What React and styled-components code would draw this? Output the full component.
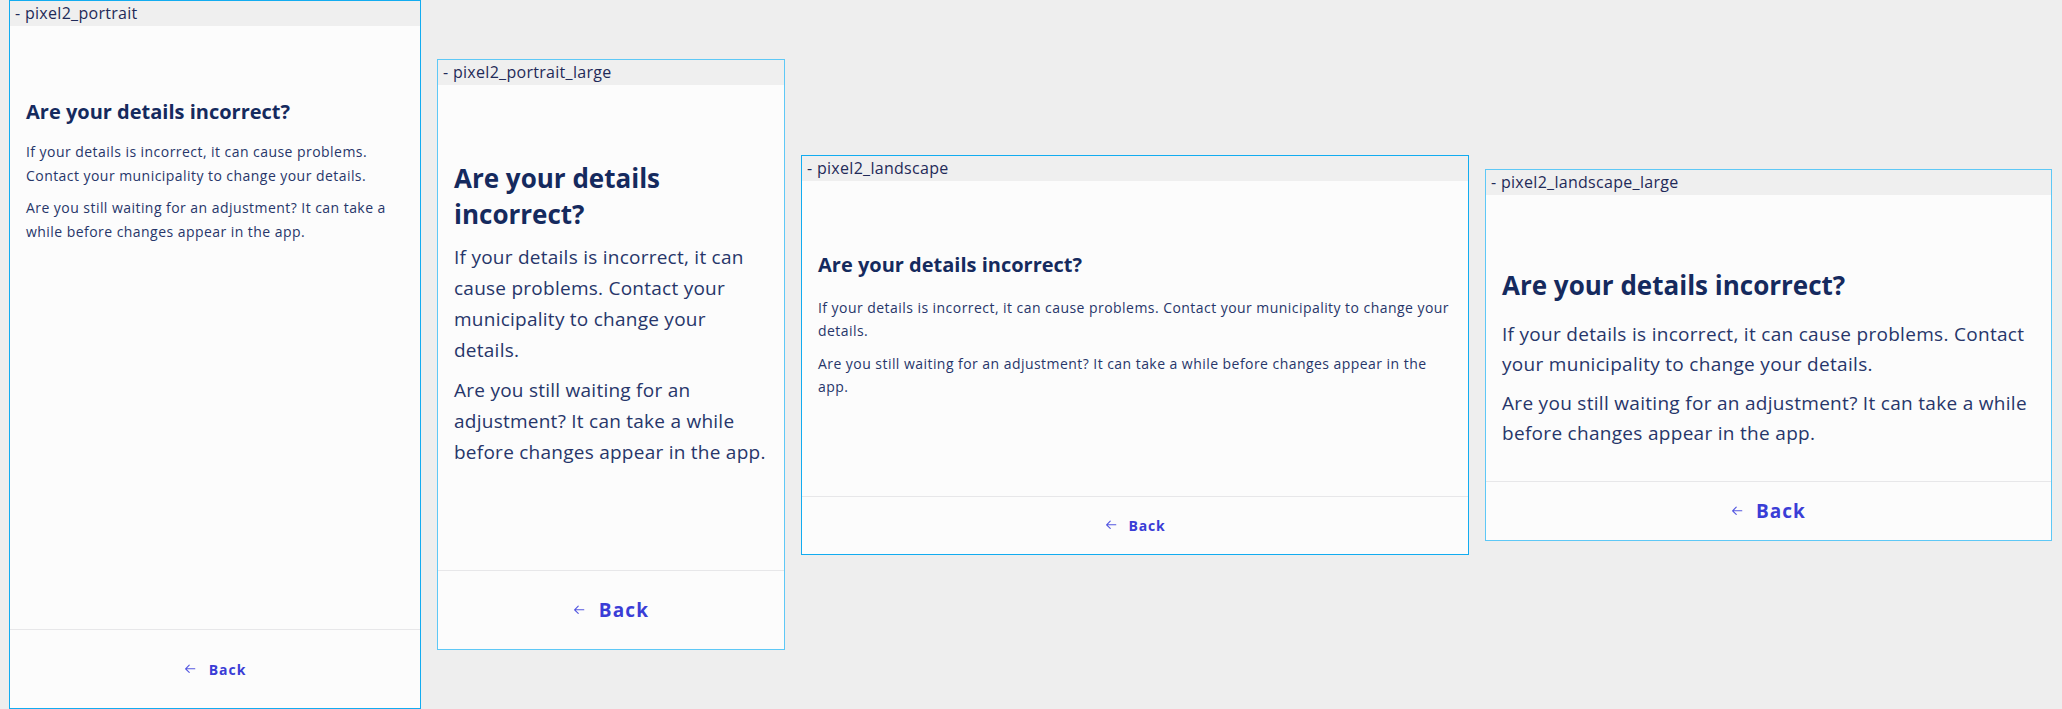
import styled, { createGlobalStyle } from "styled-components";

const GlobalStyle = createGlobalStyle`
  html, body {
    margin: 0;
    padding: 0;
    background: #eeeeee;
    font-family: "Open Sans", "Noto Sans", sans-serif;
  }
`;

const Page = styled.div`
  height: 709px;
  padding-left: 9px;
  display: flex;
  flex-direction: row;
  align-items: center;
  gap: 16px;
  overflow: hidden;
`;

const Frame = styled.div`
  flex-shrink: 0;
  width: ${props => props.$w}px;
  height: ${props => props.$h}px;
  box-sizing: border-box;
  border: 1px solid ${props => (props.$soft ? "#5ec8f6" : "#12acf0")};
  background: #fcfcfc;
  display: flex;
  flex-direction: column;
  overflow: hidden;
`;

const FrameHeader = styled.div`
  height: 25px;
  flex-shrink: 0;
  background: #efefef;
  padding-left: 5px;
  font-size: 16px;
  line-height: 25px;
  letter-spacing: 0.3px;
  color: #1f2a58;
  overflow: hidden;
  white-space: nowrap;
`;

const Content = styled.div`
  flex: 1;
  padding: ${props => props.$top}px 16px 0 16px;
  overflow: hidden;
`;

const Title = styled.h1`
  margin: 0 0 ${props => props.$gap}px 0;
  font-size: ${props => props.$size}px;
  line-height: ${props => props.$lh}px;
  font-weight: 700;
  color: #152a5e;
`;

const Paragraph = styled.p`
  margin: 0 0 ${props => props.$gap}px 0;
  font-size: ${props => props.$size}px;
  line-height: ${props => props.$lh}px;
  letter-spacing: ${props => props.$ls}px;
  color: #27366a;
`;

const Footer = styled.div`
  height: ${props => props.$h}px;
  flex-shrink: 0;
  border-top: 1px solid #e7e7e9;
  display: flex;
  align-items: center;
  justify-content: center;
`;

const BackButton = styled.button`
  border: none;
  background: none;
  padding: 0;
  display: flex;
  align-items: center;
  gap: ${props => props.$gap}px;
  font-family: "Open Sans", "Noto Sans", sans-serif;
  font-size: ${props => props.$size}px;
  font-weight: 700;
  letter-spacing: ${props => props.$ls}px;
  color: #3a3dd6;
  cursor: pointer;
`;

function ArrowLeft({ size }) {
  return (
    <svg width={size} height={size * 0.8} viewBox="0 0 12 10" fill="none">
      <path
        d="M11 5H1.5M5.2 1.2L1.4 5l3.8 3.8"
        stroke="#5457e0"
        strokeWidth="1.2"
        strokeLinecap="round"
        strokeLinejoin="round"
      />
    </svg>
  );
}

const frames = [
  {
    name: "pixel2_portrait",
    w: 412, h: 709, top: 74,
    title: { size: 20, lh: 24, gap: 16 },
    body: { size: 14, lh: 24, gap: 8, ls: 0.45 },
    footer: 78,
    back: { size: 14, ls: 1, gap: 13, arrow: 12 }
  },
  {
    name: "pixel2_portrait_large",
    soft: true,
    w: 348, h: 591, top: 75,
    title: { size: 26, lh: 36, gap: 10 },
    body: { size: 19, lh: 31, gap: 9, ls: 0.25 },
    footer: 78,
    back: { size: 19, ls: 1.2, gap: 14, arrow: 12 }
  },
  {
    name: "pixel2_landscape",
    w: 668, h: 400, top: 72,
    title: { size: 20, lh: 24, gap: 19 },
    body: { size: 14, lh: 23.5, gap: 9, ls: 0.45 },
    footer: 57,
    back: { size: 14, ls: 0.8, gap: 12, arrow: 12 }
  },
  {
    name: "pixel2_landscape_large",
    soft: true,
    w: 567, h: 372, top: 74,
    title: { size: 26, lh: 32, gap: 18 },
    body: { size: 19, lh: 30, gap: 9, ls: 0.3 },
    footer: 58,
    back: { size: 19, ls: 1, gap: 13, arrow: 12 }
  }
];

function DeviceFrame({ f }) {
  return (
    <Frame $w={f.w} $h={f.h} $soft={f.soft}>
      <FrameHeader>- {f.name}</FrameHeader>
      <Content $top={f.top}>
        <Title $size={f.title.size} $lh={f.title.lh} $gap={f.title.gap}>
          Are your details incorrect?
        </Title>
        <Paragraph $size={f.body.size} $lh={f.body.lh} $gap={f.body.gap} $ls={f.body.ls}>
          If your details is incorrect, it can cause problems. Contact your
          municipality to change your details.
        </Paragraph>
        <Paragraph $size={f.body.size} $lh={f.body.lh} $gap={f.body.gap} $ls={f.body.ls}>
          Are you still waiting for an adjustment? It can take a while before
          changes appear in the app.
        </Paragraph>
      </Content>
      <Footer $h={f.footer}>
        <BackButton $size={f.back.size} $ls={f.back.ls} $gap={f.back.gap}>
          <ArrowLeft size={f.back.arrow} />
          Back
        </BackButton>
      </Footer>
    </Frame>
  );
}

export default function App() {
  return (
    <>
      <GlobalStyle />
      <Page>
        {frames.map(f => (
          <DeviceFrame key={f.name} f={f} />
        ))}
      </Page>
    </>
  );
}
